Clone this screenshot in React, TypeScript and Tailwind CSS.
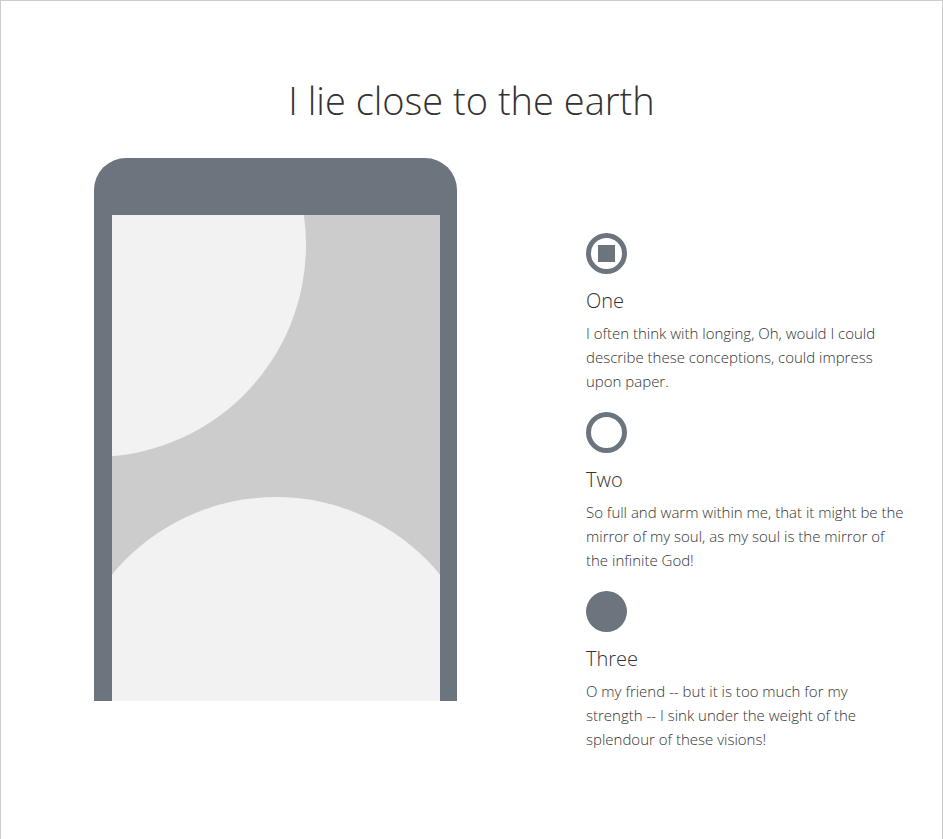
import React from 'react';

const font = { fontFamily: '"Open Sans", "Noto Sans", sans-serif' };

interface Feature {
	title: string;
	text: string;
	icon: 'stop' | 'ring' | 'dot';
}

const features: Feature[] = [
	{
		title: 'One',
		text: 'I often think with longing, Oh, would I could describe these conceptions, could impress upon paper.',
		icon: 'stop',
	},
	{
		title: 'Two',
		text: 'So full and warm within me, that it might be the mirror of my soul, as my soul is the mirror of the infinite God!',
		icon: 'ring',
	},
	{
		title: 'Three',
		text: 'O my friend -- but it is too much for my strength -- I sink under the weight of the splendour of these visions!',
		icon: 'dot',
	},
];

function FeatureIcon({ kind }: { kind: Feature['icon'] }) {
	if (kind === 'dot') {
		return <div className="w-[41px] h-[41px] rounded-full bg-[#6c757d]"></div>;
	}
	return (
		<div className="w-[41px] h-[41px] rounded-full border-[5px] border-[#6c757d] flex items-center justify-center">
			{kind === 'stop' && <div className="w-[17px] h-[17px] bg-[#6c757d]"></div>}
		</div>
	);
}

function Phone() {
	return (
		<div className="w-[363px] h-[543px] overflow-hidden shrink-0">
			<div className="bg-[#6c757d] rounded-t-[32px] pt-[57px] pl-[18px] pr-[17px] h-[600px]">
				<div className="bg-[#cccccc] h-full">
					<svg width="328" height="543" viewBox="0 0 328 543" className="block">
						<circle cx="-18" cy="30" r="212" fill="#f2f2f2" />
						<circle cx="164" cy="494" r="212" fill="#f2f2f2" />
					</svg>
				</div>
			</div>
		</div>
	);
}

export default function App() {
	return (
		<div className="min-h-[900px] bg-white border border-[#cccccc] text-[#333333]" style={font}>
			<h1 className="pt-[76px] text-center text-[38px] leading-[46px] font-light">I lie close to the earth</h1>
			<div className="flex mt-[35px] pl-[93px]">
				<Phone />
				<div className="ml-[129px] pt-[75px] w-[320px] flex flex-col gap-[19px]">
					{features.map((f) => (
						<div key={f.title}>
							<FeatureIcon kind={f.icon} />
							<h2 className="mt-[13px] text-[20px] leading-[28px] font-light">{f.title}</h2>
							<p className="mt-[6px] text-[15px] leading-[24px] font-light">{f.text}</p>
						</div>
					))}
				</div>
			</div>
		</div>
	);
}
